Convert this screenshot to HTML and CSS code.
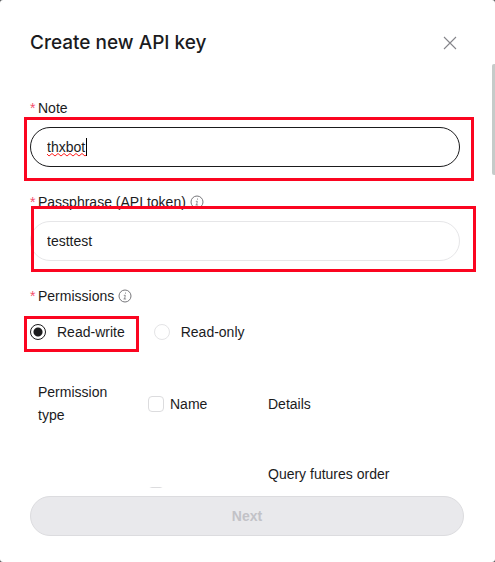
FILE: index.html
```html
<!DOCTYPE html>
<html lang="en">
<head>
<meta charset="utf-8">
<meta name="viewport" content="width=device-width, initial-scale=1">
<title>Create new API key</title>
<link rel="stylesheet" href="styles.css">
</head>
<body>
<main class="dialog">
  <header class="header">
    <h1 class="title">Create new API key</h1>
    <button class="close" type="button" aria-label="Close">
      <svg width="14" height="14" viewBox="0 0 14 14"><path d="M1 1l12 12M13 1L1 13" fill="none" stroke="#85858a" stroke-width="1.1"/></svg>
    </button>
  </header>
  <div class="scrollbar"></div>
  <form class="form">
    <div class="body">
      <div class="field">
        <label class="label" for="note"><span class="star">*</span>Note</label>
        <div class="control">
          <input class="input active" id="note" type="text" value="thxbot" spellcheck="false">
          <svg class="squiggle" width="40" height="4" viewBox="0 0 40 4"><path d="M0 1l2 2 3-2.500 3 2.500 3-2.500 3 2.500 3-2.500 3 2.500 3-2.500 3 2.500 3-2.500 3 2.500 3-2.500 3 2.500 3-2.500" fill="none" stroke="#ff2020" stroke-width="1"/></svg>
          <span class="caret"></span>
          <span class="mark mark-note"></span>
        </div>
      </div>
      <div class="field">
        <label class="label" for="pass"><span class="star">*</span>Passphrase (API token)
          <svg class="info" width="14" height="14" viewBox="0 0 14 14"><circle cx="7" cy="7" r="6" fill="none" stroke="#77777b"/><path d="M7.500 3.500v1.200M5.800 6.300h1.500L6.600 10M5.500 10h2.600" fill="none" stroke="#77777b" stroke-width=".8"/></svg>
        </label>
        <div class="control">
          <input class="input" id="pass" type="text" value="testtest">
          <span class="mark mark-pass"></span>
        </div>
      </div>
      <fieldset class="field permissions">
        <legend class="label"><span class="star">*</span>Permissions
          <svg class="info" width="14" height="14" viewBox="0 0 14 14"><circle cx="7" cy="7" r="6" fill="none" stroke="#77777b"/><path d="M7.500 3.500v1.200M5.800 6.300h1.500L6.600 10M5.500 10h2.600" fill="none" stroke="#77777b" stroke-width=".8"/></svg>
        </legend>
        <div class="radios">
          <label class="option"><input class="radio" type="radio" name="access" checked>Read-write<span class="mark mark-radio"></span></label>
          <label class="option"><input class="radio" type="radio" name="access">Read-only</label>
        </div>
      </fieldset>
      <table class="table">
        <thead>
          <tr>
            <th class="col-type">Permission type</th>
            <th class="col-name"><label class="check-label"><input class="check" type="checkbox">Name</label></th>
            <th>Details</th>
          </tr>
        </thead>
        <tbody>
          <tr class="row">
            <td></td>
            <td><input class="check" type="checkbox" aria-label="Futures orders"></td>
            <td class="details">Query futures order</td>
          </tr>
        </tbody>
      </table>
    </div>
    <footer class="footer"><button class="next" type="submit" disabled>Next</button></footer>
  </form>
</main>
</body>
</html>
```

FILE: styles.css
```css
* { box-sizing: border-box; }

body {
  margin: 0;
  background: #55585a;
  color: #1b1b1d;
  font: 14px/22px "Liberation Sans", Arial, sans-serif;
}

.dialog {
  position: relative;
  display: flex;
  flex-direction: column;
  height: 100vh;
  background: #fff;
  border-radius: 3px;
}

.header {
  display: flex;
  align-items: center;
  justify-content: space-between;
  padding: 28px 38px 6px 30px;
}

.title {
  margin: 0;
  font-family: Inter, sans-serif;
  font-size: 19px;
  line-height: 30px;
  font-weight: 500;
}

.close {
  display: flex;
  padding: 0;
  border: 0;
  background: none;
}

.scrollbar {
  position: absolute;
  top: 64px;
  right: 0;
  width: 3px;
  height: 111px;
  border-radius: 2px 0 0 2px;
  background: #c5cbc9;
}

.form {
  display: flex;
  flex: 1;
  flex-direction: column;
  min-height: 0;
}

.body {
  flex: 1;
  min-height: 0;
  overflow: hidden;
  padding: 33px 35px 0 30px;
}

.field {
  margin: 0 0 24px;
}

.label {
  display: flex;
  align-items: center;
  margin-bottom: 8px;
  padding: 0;
}

.star {
  width: 8px;
  color: #f4506c;
}

.info { margin-left: 4px; }

.control { position: relative; }

.input {
  display: block;
  width: 100%;
  height: 40px;
  padding: 0 16px;
  border: 1px solid #e6e6e8;
  border-radius: 20px;
  outline: 0;
  background: #fff;
  color: inherit;
  font: inherit;
}

.active { border-color: #1b1b1d; }

.squiggle {
  position: absolute;
  left: 17px;
  top: 26px;
}

.caret {
  position: absolute;
  left: 56px;
  top: 11px;
  width: 1px;
  height: 18px;
  background: #000;
}

.mark {
  position: absolute;
  border: 3px solid #fb0520;
  pointer-events: none;
}

.mark-note { inset: -10px -14px -14px -6px; }
.mark-pass { inset: -15px -16px -11px 1px; }
.mark-radio { inset: -5px -14px -9px -6px; }

.permissions {
  padding: 0;
  border: 0;
}

.radios {
  display: flex;
  gap: 29px;
  padding-top: 6px;
}

.option {
  position: relative;
  display: flex;
  align-items: center;
  gap: 11px;
}

.radio {
  width: 16px;
  height: 16px;
  margin: 0;
  appearance: none;
  border: 1px solid #e4e4e6;
  border-radius: 50%;
}

.radio:checked {
  border-color: #1b1b1d;
  background: radial-gradient(circle, #1b1b1d 4px, #fff 5px);
}

.table {
  width: 100%;
  margin-top: 38px;
  border-collapse: collapse;
  table-layout: fixed;
  line-height: 23px;
}

.table th,
.table td {
  padding: 0 8px;
  font-weight: 400;
  text-align: left;
}

.col-type { width: 110px; }
.col-name { width: 120px; }

.check-label {
  display: flex;
  align-items: center;
  gap: 6px;
}

.check {
  display: block;
  width: 16px;
  height: 16px;
  margin: 0;
  appearance: none;
  border: 1px solid #dcdcde;
  border-radius: 4px;
}

.row { height: 136px; }

.table .details {
  padding-top: 36px;
  vertical-align: top;
}

.footer { padding: 8px 31px 26px 30px; }

.next {
  display: block;
  width: 100%;
  height: 40px;
  border: 1px solid #dcdcdf;
  border-radius: 20px;
  background: #e9e9ec;
  color: #c2c2c7;
  font: inherit;
  font-weight: 600;
}
```
